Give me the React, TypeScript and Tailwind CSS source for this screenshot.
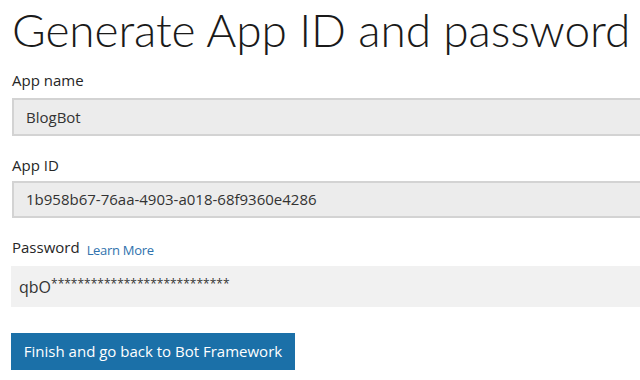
import React from "react";

export default function App() {
  const font = { fontFamily: '"Open Sans", "Noto Sans", sans-serif' };
  return (
    <div className="w-[640px] h-[380px] bg-white overflow-hidden text-[#262626]" style={font}>
      <div className="pl-[12px]">
        <h1
          className="text-[46px] font-light leading-[56px] pt-[2px] whitespace-nowrap text-[#1a1a1a] tracking-[-0.1px]"
          style={{ fontFamily: 'Lato, "Open Sans", sans-serif' }}
        >
          Generate App ID and password
        </h1>
        <div className="mt-[12px] text-[15px] leading-[20px]">App name</div>
        <div className="mt-[8px] h-[38px] bg-[#ececec] border-2 border-r-0 border-[#d3d3d3] flex items-center pl-[12px] text-[15px] text-[#333]">
          BlogBot
        </div>
        <div className="mt-[19px] text-[15px] leading-[20px]">App ID</div>
        <div className="mt-[6px] h-[37px] bg-[#ececec] border-2 border-r-0 border-[#d3d3d3] flex items-center pl-[12px] text-[15px] text-[#333]">
          1b958b67-76aa-4903-a018-68f9360e4286
        </div>
        <div className="mt-[19px] flex items-baseline gap-[7px] leading-[20px]">
          <span className="text-[15px]">Password</span>
          <span className="text-[13px] text-[#2f72ad] relative top-[2px] tracking-[-0.3px]">Learn More</span>
        </div>
        <div className="mt-[8px] -ml-[1px] h-[41px] bg-[#f1f1f1] flex items-center pl-[8px] text-[16px] text-[#333]">
          <span>qbO</span>
          <span className="text-[12px] -mt-[6px]">***************************</span>
        </div>
        <button className="mt-[26px] -ml-[1px] w-[284px] h-[37px] bg-[#1b70a8] text-white text-[15px] flex items-center justify-center">
          Finish and go back to Bot Framework
        </button>
      </div>
    </div>
  );
}
